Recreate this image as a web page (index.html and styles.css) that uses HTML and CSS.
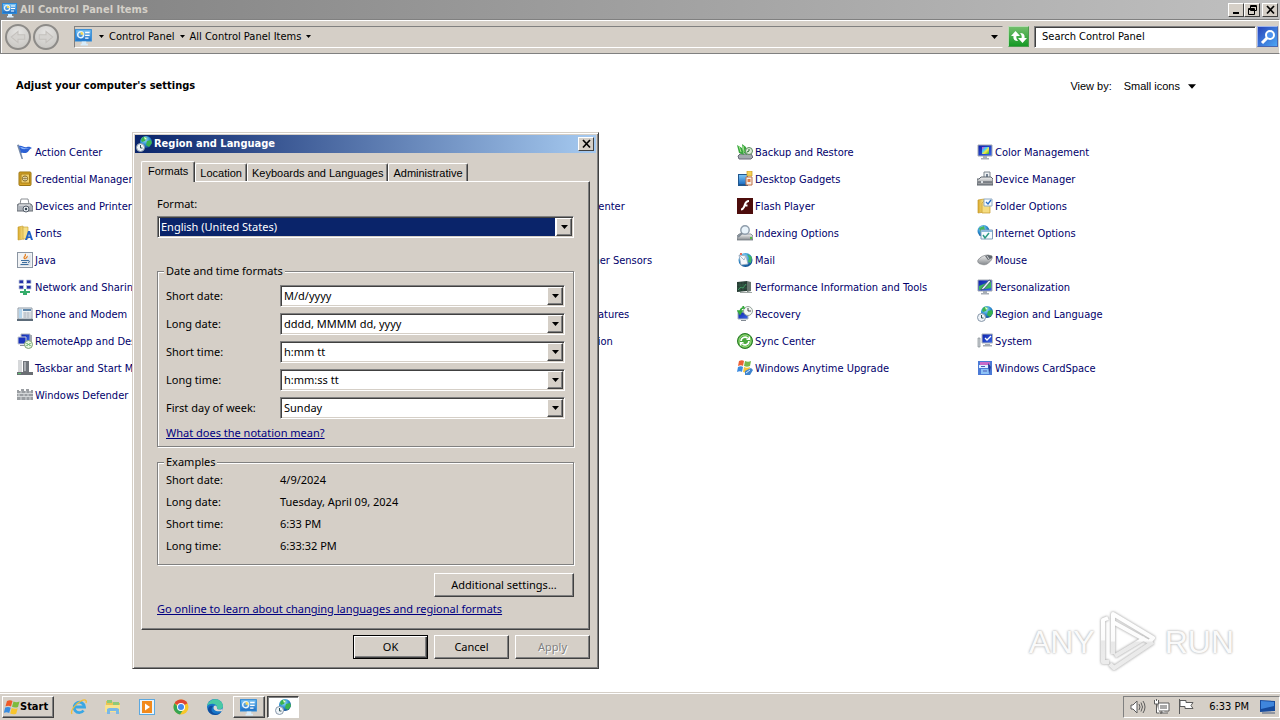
FILE: index.html
```html
<!DOCTYPE html>
<html lang="en">
<head>
<meta charset="utf-8">
<title>All Control Panel Items</title>
<link rel="stylesheet" href="styles.css">
</head>
<body>
<svg class="defs" aria-hidden="true">
  <defs>
    <linearGradient id="gBlue" x1="0" y1="0" x2="0" y2="1"><stop offset="0" stop-color="#7cc4f4"/><stop offset="1" stop-color="#1f6fc4"/></linearGradient>
    <linearGradient id="gScreen" x1="0" y1="0" x2="1" y2="1"><stop offset="0" stop-color="#0c1fa8"/><stop offset="1" stop-color="#3d6be8"/></linearGradient>
    <linearGradient id="gGold" x1="0" y1="0" x2="1" y2="0"><stop offset="0" stop-color="#d9a92c"/><stop offset="1" stop-color="#f8e48e"/></linearGradient>
    <radialGradient id="gGlobe" cx=".4" cy=".3" r=".8"><stop offset="0" stop-color="#a8e4ff"/><stop offset=".5" stop-color="#2c8fd0"/><stop offset="1" stop-color="#0b3b80"/></radialGradient>
    <linearGradient id="gGrey" x1="0" y1="0" x2="0" y2="1"><stop offset="0" stop-color="#f4f4f4"/><stop offset="1" stop-color="#85898d"/></linearGradient>
    <linearGradient id="gRainbow" x1="0" y1="0" x2="1" y2="1"><stop offset="0" stop-color="#f03cc0"/><stop offset=".35" stop-color="#3ad0ff"/><stop offset=".6" stop-color="#ffe93c"/><stop offset="1" stop-color="#18b040"/></linearGradient>
    <linearGradient id="gMark" x1="0" y1="0" x2="0" y2="1"><stop offset="0" stop-color="#fff"/><stop offset=".5" stop-color="#fbfbfb"/><stop offset=".52" stop-color="#e9e9e9"/><stop offset="1" stop-color="#ececec"/></linearGradient>
  </defs>
  <symbol id="cpanel" viewBox="0 0 16 16"><path d="M0 1h15v11H0z" fill="#2c8ad8"/><path d="M1 2h13v9H1z" fill="url(#gBlue)"/><circle cx="5" cy="6" r="2.6" fill="none" stroke="#e8f6ff" stroke-width="1.3"/><path d="M5 6V3.4A2.6 2.6 0 0 1 7.6 6z" fill="#f6d95c"/><path d="M9 4h4M9 6.500h4M9 9h3" stroke="#fff" stroke-width="1.200"/><path d="M6 12h4v2h1.500v1.500H5V14h1z" fill="#d7ecfa"/></symbol>
  <symbol id="region" viewBox="0 0 16 16"><circle cx="10" cy="6" r="6" fill="url(#gGlobe)"/><path d="M6 2c2-2 4-1 5 0L9 5 6 6 5 4zM11 5l4-1 1 3-3 4-3-2z" fill="#39b34f"/><path d="M8 1l3 1-2 2z" fill="#e6ffd4"/><circle cx="4.500" cy="11.500" r="4" fill="#eef3f8" stroke="#8796a8"/><path d="M4.500 9v3h2" fill="none" stroke="#355" /></symbol>
  <symbol id="flag" viewBox="0 0 16 16"><path d="M0 1l2-.5L6 15H4.500z" fill="#7488a8"/><path d="M2 2c3-1 5 2 8 1 2-.5 3 0 5 1-3 1-3 4-6 5-2 .5-3-1-5 0z" fill="#2c61d4"/><path d="M3 3c3-.5 4 2 7 1l3 .5c-4 0-4 1-8 .5z" fill="#8ab4fb"/></symbol>
  <symbol id="safe" viewBox="0 0 16 16"><rect x="2" y="1" width="12" height="13.500" rx="1" fill="#d8a629" stroke="#9a7413"/><rect x="4" y="3" width="8.500" height="9" fill="#f0d070" stroke="#a87e17"/><circle cx="8" cy="7.500" r="2.600" fill="#fbf4cf" stroke="#866a26"/><path d="M8 5v5M5.500 7.500h5" stroke="#866a26" stroke-width=".7"/></symbol>
  <symbol id="printer" viewBox="0 0 16 16"><path d="M4 1h7l1 5H3z" fill="#fff" stroke="#8b8f94"/><path d="M1 6h13l2 3v4H0V8z" fill="#aeb3ba" stroke="#666c74"/><path d="M2 7h11" stroke="#f4f4f4"/><circle cx="9" cy="11" r="3" fill="#e9edf1" stroke="#545c68"/><circle cx="9" cy="11" r="1.200" fill="#31404f"/></symbol>
  <symbol id="fonts" viewBox="0 0 16 16"><path d="M1 2l5-1 1 13-6 1z" fill="url(#gGold)" stroke="#c49a2d" stroke-width=".6"/><path d="M6 2h5v12H6z" fill="#f5df86" stroke="#c49a2d" stroke-width=".6"/><path d="M8 15L11 6h2l3 9h-2l-.7-2h-2.600L10 15zM11.200 11.500h1.600L12 9z" fill="#1e60c8"/></symbol>
  <symbol id="java" viewBox="0 0 16 16"><rect x=".5" y=".5" width="15" height="15" fill="#f1f3f5" stroke="#8b96a3"/><path d="M2 14L14 2v12z" fill="#dfe4ea"/><path d="M8 2c2 2-3 3 0 5M10 4c1 1-2 2-1 3" fill="none" stroke="#e6801f" stroke-width="1.200"/><path d="M4 8.500h7M5 10.500h5M3.500 12.500h8M11 8.500c2 0 2 2 0 2" fill="none" stroke="#3e6f9f"/></symbol>
  <symbol id="network" viewBox="0 0 16 16"><g fill="#2331a8" stroke="#c3ccda" stroke-width=".8"><path d="M2 1h4.500v3.500H2zM9.500 1H14v3.500H9.500zM2 6.500h4.500V10H2zM9.500 6.500H14V10H9.500z"/></g><path d="M7 10h2v2h4v2h-3v2H6v-2H3v-2h4z" fill="#35ad6b"/></symbol>
  <symbol id="phone" viewBox="0 0 16 16"><path d="M1 2h14v11H1z" fill="#eef2f5" stroke="#8f9ba7"/><path d="M2 3h3v9H2z" fill="#b4d4ec"/><path d="M6 3h8v2H6z" fill="#5f87ab"/><path d="M6 7h8M6 9h8M6 11h8M8 6v6M11 6v6" stroke="#aab3bc" stroke-width=".8"/><path d="M0 13h16v2H0z" fill="#5c6b79"/></symbol>
  <symbol id="remote" viewBox="0 0 16 16"><path d="M4 1h9v8H4z" fill="url(#gScreen)" stroke="#b4b8bd"/><path d="M1 4h8v7H1z" fill="#1a33bd" stroke="#c8ccd2"/><path d="M3 12h5v1H3z" fill="#8a9098"/><path d="M13 2h2v6h-2z" fill="#a3a9b1"/><circle cx="11.500" cy="11.500" r="4" fill="#e5f4de" stroke="#7e9e72"/><path d="M9.500 10l1.500 1.500L9.500 13M13.500 10L12 11.500l1.500 1.500" fill="none" stroke="#38933b"/></symbol>
  <symbol id="taskbar" viewBox="0 0 16 16"><path d="M1 0h4v13H1z" fill="#d6d8da"/><path d="M6 1h6v11H6z" fill="#70757b"/><path d="M7 2h2v9H7z" fill="#a9adb2"/><path d="M0 12h16v3H0z" fill="#6a6e73"/><path d="M1 13h3v1H1z" fill="#5bc26b"/></symbol>
  <symbol id="defender" viewBox="0 0 16 16"><path d="M0 3h2v1h2V2h3v2h2V2h3v2h2V3h2v10H0z" fill="#9a9ea2"/><path d="M0 6.500h16M0 9.500h16M4 4v2.500M9 4v2.500M13 4v2.500M2 7v2.500M7 7v2.500M11 7v2.500M4 10v3M9 10v3M13 10v3" stroke="#e2e4e6" stroke-width=".8"/></symbol>
  <symbol id="backup" viewBox="0 0 16 16"><path d="M1 12l2-2h11l2 3-2 2H2z" fill="#a3a9ae" stroke="#667"/><path d="M0 1l5 3 2 7-5-2zM5 0l4 3 1 8-4-3z" fill="#39a63e"/><path d="M2 2l2 6M6 2l1 6" stroke="#a5e890"/><circle cx="12" cy="7" r="3.500" fill="#dcebd9" stroke="#5d8a5d"/><path d="M12 5v2l-2 1" stroke="#236b2b" fill="none"/></symbol>
  <symbol id="gadgets" viewBox="0 0 16 16"><path d="M1 3h10v12H1z" fill="#20568e"/><path d="M2 4h8v9H2z" fill="url(#gBlue)"/><path d="M10 0h5v5h-5z" fill="#f4d056" stroke="#c99c20" stroke-width=".7"/><path d="M9 6h6v8H9z" fill="#f6efe7" stroke="#c07046"/><path d="M10.500 8h3v3h-3z" fill="#df7a44"/></symbol>
  <symbol id="flash" viewBox="0 0 16 16"><path d="M0 0h16v16H0z" fill="#4d0d0c"/><path d="M12 3C8 3 8 7 7 9s-1.500 2.500-3 2.500M7.500 7.500h3" stroke="#fff" stroke-width="2" fill="none"/></symbol>
  <symbol id="indexing" viewBox="0 0 16 16"><path d="M0 11l2-2h12l2 2v4H0z" fill="url(#gGrey)" stroke="#747b83" stroke-width=".8"/><circle cx="8" cy="5" r="4.200" fill="#eaf4fb" stroke="#8f9dab" stroke-width="1.400"/><path d="M5 8l-4 4" stroke="#808b96" stroke-width="2"/><path d="M13 12h2v2h-2z" fill="#58ba45"/></symbol>
  <symbol id="mail" viewBox="0 0 16 16"><circle cx="8.500" cy="8" r="7" fill="url(#gGlobe)"/><path d="M10 2l5 3-1 6-3-1 1-4z" fill="#42b565"/><path d="M2 3l7 1 2 8-7 1z" fill="#f5f8fc" stroke="#98a9be" stroke-width=".8"/><path d="M2 3l5 5 2-4" fill="none" stroke="#98a9be" stroke-width=".8"/><path d="M3 1h2v2H3z" fill="#e36a58"/></symbol>
  <symbol id="perf" viewBox="0 0 16 16"><path d="M0 3l10-1v10L0 13z" fill="#283d35"/><path d="M10 2l4 1v9l-4 1z" fill="#68766f"/><path d="M0 6h10M0 9h10M3 3v10M6 3v9" stroke="#37694b" stroke-width=".6"/><path d="M1 11l3-3 2 1 3-4" stroke="#3f9660" fill="none"/><path d="M3 13h12v1H3z" fill="#9ca4a1"/></symbol>
  <symbol id="recovery" viewBox="0 0 16 16"><path d="M1 6h10v7H1z" fill="url(#gScreen)" stroke="#a9b3bf"/><circle cx="11" cy="5" r="4.500" fill="#f3f7f4" stroke="#95a39b"/><path d="M11 2v3h3" stroke="#444" fill="none"/><path d="M3 8c0-5 1-6 4-6l-1-2M3 8L1 5h4z" stroke="#35a83c" stroke-width="1.600" fill="#35a83c"/><path d="M4 14h5v1H4z" fill="#818992"/></symbol>
  <symbol id="sync" viewBox="0 0 16 16"><circle cx="8" cy="8" r="7.500" fill="#48a63c" stroke="#2c7c27"/><circle cx="8" cy="8" r="6" fill="none" stroke="#a4e084"/><path d="M4 8a4 4 0 0 1 6.500-3M12 8a4 4 0 0 1-6.500 3" stroke="#fff" stroke-width="1.800" fill="none"/><path d="M9 7h4V3zM7 9H3v4z" fill="#fff"/></symbol>
  <symbol id="winflag" viewBox="0 0 16 16"><path d="M3 2c2-1 4-1 5.500 0L7 7.500C5.500 6.500 3.500 6.500 1.500 7.300z" fill="#ee5a28"/><path d="M9.500 2.500c2 1 4 1 6 0L14 8c-2 .8-4 .7-6-.2z" fill="#7dbb3c"/><path d="M1.200 8.500c2-.8 4-.8 5.500.2L5.200 14C3.700 13 1.900 12.800-.1 13.700z" fill="#388ce0"/><path d="M7.700 9c2 1 4 1 6 .2L12.200 14.700c-2 .8-4 .7-6-.2z" fill="#f8c52c"/></symbol>
  <symbol id="upgrade" viewBox="0 0 16 16"><path d="M2 1c2-1 4-1 5 0L6 6C5 5 3 5 1 6z" fill="#ec6035"/><path d="M8 1c2 1 4 1 6 0l-1 5c-2 1-4 1-6 0z" fill="#75b94c"/><path d="M1 7c2-1 4-1 5 0l-1 5c-1-1-3-1-5 0z" fill="#3b8be0"/><path d="M7 7c2 1 4 1 6 0l-1 5c-2 1-4 1-6 0z" fill="#f4c53c"/><path d="M8 11l6-3 2 2-3 5H8z" fill="#3f85cf"/><path d="M9 13l4-3" stroke="#d8ecff" fill="none"/></symbol>
  <symbol id="monitor" viewBox="0 0 16 16"><path d="M1 1h14v11H1z" fill="url(#gScreen)" stroke="#a4aab2"/><path d="M6 12h4v2h2v1.500H4V14h2z" fill="#a7adb5"/></symbol>
  <symbol id="color" viewBox="0 0 16 16"><use href="#monitor"/><path d="M5 3h7v7H5z" fill="url(#gRainbow)"/></symbol>
  <symbol id="device" viewBox="0 0 16 16"><path d="M7 1h6v7H7z" fill="#edf0f2" stroke="#7f868e"/><path d="M9 3h2v3H9z" fill="#738192"/><path d="M2 8l2-2h10l2 2v6H0V8z" fill="url(#gGrey)" stroke="#5d646d"/><path d="M1 11h14" stroke="#4e555e"/><path d="M4 10h2v2H4z" fill="#dde2e6"/></symbol>
  <symbol id="folder" viewBox="0 0 16 16"><path d="M1 2l6-1v13l-6 1z" fill="url(#gGold)" stroke="#c49a2d" stroke-width=".7"/><path d="M7 3h6v12H5V5z" fill="#f5dc80" stroke="#c49a2d" stroke-width=".7"/><path d="M7 1h8v7H7z" fill="#f5fbff" stroke="#8ea9c2"/><path d="M9 4l2 2 3-4" fill="none" stroke="#2b6fc6" stroke-width="1.300"/></symbol>
  <symbol id="internet" viewBox="0 0 16 16"><circle cx="6.500" cy="6" r="6" fill="url(#gGlobe)"/><path d="M2 3l5-2 1 4-4 3z" fill="#48b85c"/><path d="M4 5h11.500v9H4z" fill="#f6fbff" stroke="#819fb9"/><path d="M4 5h11v2H4z" fill="#8db9db"/><path d="M6 10l2 3 4-5" fill="none" stroke="#2c9b83" stroke-width="1.500"/></symbol>
  <symbol id="mouse" viewBox="0 0 16 16"><path d="M1 8c2-3 6-5 10-5l4 1c1 3-2 6-5 8-2 1-4 1-6 0-2 0-4-2-3-4z" fill="url(#gGrey)" stroke="#85898d" stroke-width=".8"/><path d="M8 4l3 4 4-2V4l-4-1z" fill="#63686e"/><path d="M10 4l2 3" stroke="#d4d7da"/></symbol>
  <symbol id="personal" viewBox="0 0 16 16"><use href="#monitor"/><path d="M2 7l12-5v7l-12 2z" fill="#3db65c"/><path d="M5 9l7-8 2 1-7 8-3 1z" fill="#e9f1fa" stroke="#32406a" stroke-width=".7"/></symbol>
  <symbol id="system" viewBox="0 0 16 16"><path d="M5 1h10.500v9H5z" fill="url(#gScreen)" stroke="#aeb5bc"/><path d="M8 5l2 2 4-4" stroke="#fff" fill="none" stroke-width="1.300"/><path d="M1 5h2v9H1z" fill="#cbd0d4" stroke="#858c94" stroke-width=".7"/><path d="M8 11h5v1h2v1.500H6V12h2z" fill="#a6acb3"/></symbol>
  <symbol id="cardspace" viewBox="0 0 16 16"><path d="M1 1h14v14H1z" fill="#4c7ad6"/><path d="M3 2h10v3H3z" fill="#c96ac8"/><path d="M2 5h9v3H2z" fill="#dff0ff"/><path d="M4 9h9l-1 5H4z" fill="#8dc2f6"/><path d="M11 3l3 4-2 7z" fill="#253b96"/><path d="M4 6.500h4M6 11h4" stroke="#4d5cb8"/></symbol>
  <symbol id="ie" viewBox="0 0 18 18"><path d="M13.500 12.500A5.200 5.200 0 1 1 14.500 9H5" fill="none" stroke="#3aa7e4" stroke-width="2.800"/><path d="M2 16C0 13 5 6 11 3c4-2 6-1 5 2" fill="none" stroke="#f3bd35" stroke-width="1.300"/></symbol>
  <symbol id="explorer" viewBox="0 0 18 18"><path d="M2 3h6l1 2h7v9H2z" fill="#e9c552"/><path d="M3 2h5v3H3zM9 4h6v3H9z" fill="#8ec978"/><path d="M1 7h15v7H1z" fill="#f8e38f"/><path d="M3 16v-5l2-1h8l2 1v5h-3v-3H6v3z" fill="#79b8e6"/></symbol>
  <symbol id="player" viewBox="0 0 18 18"><path d="M1 1h16v16H1z" fill="#5ca8df"/><path d="M2 2h14v14H2z" fill="#e9f5fd"/><path d="M4 3h10v12H4z" fill="#f28a1c"/><path d="M7 5.500l5 3.500-5 3.500z" fill="#fff"/></symbol>
  <symbol id="chrome" viewBox="0 0 18 18"><circle cx="9" cy="9" r="7.500" fill="#f7c72a"/><path d="M9 9L2.500 5.200a7.500 7.500 0 0 1 13 0z" fill="#df4534"/><path d="M2.500 5.200a7.500 7.500 0 0 0 5.500 11.200l3-4.400-4-2z" fill="#36a553"/><circle cx="9" cy="9" r="4" fill="#fff"/><circle cx="9" cy="9" r="3" fill="#4389ec"/></symbol>
  <symbol id="edge" viewBox="0 0 18 18"><circle cx="9" cy="9" r="8" fill="#1776c9"/><path d="M1 8C3-1 16-1 17 8c0 4-5 4-6 2 1-4-6-6-10-2z" fill="#49c9a4"/><path d="M7 8c-5 7 4 10 8 6-3 5-12 3-13-2 0-3 2-5 5-4z" fill="#124c9a"/><path d="M8 8c-2 4 2 6 8 5l1-3c-1 2-6 2-6 0 0-3-2-3-3-2z" fill="#dcdad4"/></symbol>
  <symbol id="down" viewBox="0 0 7 4"><path d="M0 0h7L3.500 4z"/></symbol>
</svg>

<header class="titlebar">
  <svg class="i16"><use href="#cpanel"/></svg>
  <h1 class="titlebar-text">All Control Panel Items</h1>
  <div class="window-buttons">
    <button class="wbtn" aria-label="Minimize"><svg viewBox="0 0 11 10"><path d="M2 7h6v2H2z"/></svg></button>
    <button class="wbtn" aria-label="Restore"><svg viewBox="0 0 11 10"><path d="M3.500 0.500h6v5h-6zM3 1.500h7M1.500 3.500h6v6h-6zM1 4.500h7" fill="none" stroke="#000"/></svg></button>
    <button class="wbtn wbtn-close" aria-label="Close"><svg viewBox="0 0 11 10"><path d="M2 1l7 7.500M9 1L2 8.500" stroke="#000" stroke-width="1.700"/></svg></button>
  </div>
</header>

<nav class="toolbar" aria-label="Navigation">
  <div class="history">
    <button class="round" aria-label="Back"><svg viewBox="0 0 16 16"><path d="M14 6H8V3L2 8l6 5v-3h6z"/></svg></button>
    <button class="round" aria-label="Forward"><svg viewBox="0 0 16 16"><path d="M2 6h6V3l6 5-6 5v-3H2z"/></svg></button>
  </div>
  <div class="address">
    <svg class="i18"><use href="#cpanel"/></svg>
    <svg class="crumb-arrow"><use href="#down"/></svg>
    <a href="#" class="crumb">Control Panel</a>
    <svg class="crumb-arrow"><use href="#down"/></svg>
    <a href="#" class="crumb">All Control Panel Items</a>
    <svg class="crumb-arrow"><use href="#down"/></svg>
    <button class="address-drop" aria-label="Previous locations"><svg><use href="#down"/></svg></button>
  </div>
  <button class="tool refresh" aria-label="Refresh"><svg viewBox="0 0 18 18"><path d="M8 13C4 13 3 11 3.500 8H1l4.500-5L10 8H6.500c-.5 2 0 3 1.500 5zM10 5c4 0 5 2 4.500 5H17l-4.500 5L8 10h3.500c.5-2 0-3-1.500-5z" fill="#fff"/></svg></button>
  <input class="search" type="text" aria-label="Search Control Panel" placeholder="Search Control Panel">
  <button class="tool go" aria-label="Search"><svg viewBox="0 0 18 18"><circle cx="11" cy="7" r="4" fill="#4d91ee" stroke="#fff" stroke-width="2"/><path d="M8 10l-5 5" stroke="#fff" stroke-width="3"/></svg></button>
</nav>

<main class="content">
  <div class="heading">
    <h2 class="adjust">Adjust your computer's settings</h2>
    <div class="viewby"><span>View by:</span><button class="view-choice">Small icons <svg><use href="#down"/></svg></button></div>
  </div>
  <div class="items">
    <ul class="column">
      <li><a href="#"><svg class="i16"><use href="#flag"/></svg>Action Center</a></li>
      <li><a href="#"><svg class="i16"><use href="#safe"/></svg>Credential Manager</a></li>
      <li><a href="#"><svg class="i16"><use href="#printer"/></svg>Devices and Printers</a></li>
      <li><a href="#"><svg class="i16"><use href="#fonts"/></svg>Fonts</a></li>
      <li><a href="#"><svg class="i16"><use href="#java"/></svg>Java</a></li>
      <li><a href="#"><svg class="i16"><use href="#network"/></svg>Network and Sharing Center</a></li>
      <li><a href="#"><svg class="i16"><use href="#phone"/></svg>Phone and Modem</a></li>
      <li><a href="#"><svg class="i16"><use href="#remote"/></svg>RemoteApp and Desktop Connections</a></li>
      <li><a href="#"><svg class="i16"><use href="#taskbar"/></svg>Taskbar and Start Menu</a></li>
      <li><a href="#"><svg class="i16"><use href="#defender"/></svg>Windows Defender</a></li>
    </ul>
    <ul class="column column-middle">
      <li class="row-3"><a href="#"><svg class="i16"><use href="#internet"/></svg>Ease of Access Center</a></li>
      <li class="row-5"><a href="#"><svg class="i16"><use href="#region"/></svg>Location and Other Sensors</a></li>
      <li class="row-7"><a href="#"><svg class="i16"><use href="#java"/></svg>Programs and Features</a></li>
      <li class="row-8"><a href="#"><svg class="i16"><use href="#mouse"/></svg>Speech Recognition</a></li>
    </ul>
    <ul class="column">
      <li><a href="#"><svg class="i16"><use href="#backup"/></svg>Backup and Restore</a></li>
      <li><a href="#"><svg class="i16"><use href="#gadgets"/></svg>Desktop Gadgets</a></li>
      <li><a href="#"><svg class="i16"><use href="#flash"/></svg>Flash Player</a></li>
      <li><a href="#"><svg class="i16"><use href="#indexing"/></svg>Indexing Options</a></li>
      <li><a href="#"><svg class="i16"><use href="#mail"/></svg>Mail</a></li>
      <li><a href="#"><svg class="i16"><use href="#perf"/></svg>Performance Information and Tools</a></li>
      <li><a href="#"><svg class="i16"><use href="#recovery"/></svg>Recovery</a></li>
      <li><a href="#"><svg class="i16"><use href="#sync"/></svg>Sync Center</a></li>
      <li><a href="#"><svg class="i16"><use href="#upgrade"/></svg>Windows Anytime Upgrade</a></li>
    </ul>
    <ul class="column">
      <li><a href="#"><svg class="i16"><use href="#color"/></svg>Color Management</a></li>
      <li><a href="#"><svg class="i16"><use href="#device"/></svg>Device Manager</a></li>
      <li><a href="#"><svg class="i16"><use href="#folder"/></svg>Folder Options</a></li>
      <li><a href="#"><svg class="i16"><use href="#internet"/></svg>Internet Options</a></li>
      <li><a href="#"><svg class="i16"><use href="#mouse"/></svg>Mouse</a></li>
      <li><a href="#"><svg class="i16"><use href="#personal"/></svg>Personalization</a></li>
      <li><a href="#"><svg class="i16"><use href="#region"/></svg>Region and Language</a></li>
      <li><a href="#"><svg class="i16"><use href="#system"/></svg>System</a></li>
      <li><a href="#"><svg class="i16"><use href="#cardspace"/></svg>Windows CardSpace</a></li>
    </ul>
  </div>
  <div class="watermark">
    <span>ANY</span>
    <svg viewBox="0 0 60 64"><g fill="none" stroke="url(#gMark)" stroke-width="4" stroke-linejoin="round"><path d="M8 8l-5 2v42h6"/><path d="M13 44V4l40 24-4 4-36-20M53 32L14 58l-4-4M15 46l30-18"/></g></svg>
    <span>RUN</span>
  </div>
</main>

<section class="dialog" role="dialog" aria-labelledby="dialog-title">
  <header class="dialog-title">
    <svg class="i16"><use href="#region"/></svg>
    <h2 id="dialog-title">Region and Language</h2>
    <button class="wbtn" aria-label="Close"><svg viewBox="0 0 11 10"><path d="M2 1l7 7.500M9 1L2 8.500" stroke="#000" stroke-width="1.700"/></svg></button>
  </header>
  <div class="tabs" role="tablist">
    <button class="tab tab-active" role="tab" aria-selected="true">Formats</button>
    <button class="tab" role="tab">Location</button>
    <button class="tab" role="tab">Keyboards and Languages</button>
    <button class="tab" role="tab">Administrative</button>
  </div>
  <form class="panel">
    <label class="format-label" for="format">Format:</label>
    <div class="combo combo-selected"><select id="format"><option>English (United States)</option></select><span class="combo-arrow"><svg><use href="#down"/></svg></span></div>
    <fieldset class="group formats">
      <legend>Date and time formats</legend>
      <div class="field"><label for="sd">Short date:</label><div class="combo"><select id="sd"><option>M/d/yyyy</option></select><span class="combo-arrow"><svg><use href="#down"/></svg></span></div></div>
      <div class="field"><label for="ld">Long date:</label><div class="combo"><select id="ld"><option>dddd, MMMM dd, yyyy</option></select><span class="combo-arrow"><svg><use href="#down"/></svg></span></div></div>
      <div class="field"><label for="st">Short time:</label><div class="combo"><select id="st"><option>h:mm tt</option></select><span class="combo-arrow"><svg><use href="#down"/></svg></span></div></div>
      <div class="field"><label for="lt">Long time:</label><div class="combo"><select id="lt"><option>h:mm:ss tt</option></select><span class="combo-arrow"><svg><use href="#down"/></svg></span></div></div>
      <div class="field"><label for="fd">First day of week:</label><div class="combo"><select id="fd"><option>Sunday</option></select><span class="combo-arrow"><svg><use href="#down"/></svg></span></div></div>
      <a class="link" href="#">What does the notation mean?</a>
    </fieldset>
    <fieldset class="group">
      <legend>Examples</legend>
      <dl class="examples">
        <dt>Short date:</dt><dd>4/9/2024</dd>
        <dt>Long date:</dt><dd>Tuesday, April 09, 2024</dd>
        <dt>Short time:</dt><dd>6:33 PM</dd>
        <dt>Long time:</dt><dd>6:33:32 PM</dd>
      </dl>
    </fieldset>
    <button class="btn btn-wide" type="button">Additional settings...</button>
    <a class="link" href="#">Go online to learn about changing languages and regional formats</a>
  </form>
  <footer class="actions">
    <button class="btn btn-default">OK</button>
    <button class="btn">Cancel</button>
    <button class="btn" disabled>Apply</button>
  </footer>
</section>

<footer class="taskbar">
  <button class="start"><svg class="i16"><use href="#winflag"/></svg>Start</button>
  <div class="tasks">
    <button class="task" aria-label="Internet Explorer"><svg class="i18"><use href="#ie"/></svg></button>
    <button class="task" aria-label="Windows Explorer"><svg class="i18"><use href="#explorer"/></svg></button>
    <button class="task" aria-label="Media Player"><svg class="i18"><use href="#player"/></svg></button>
    <button class="task" aria-label="Chrome"><svg class="i18"><use href="#chrome"/></svg></button>
    <button class="task" aria-label="Edge"><svg class="i18"><use href="#edge"/></svg></button>
    <button class="task task-open" aria-label="Control Panel"><svg class="i18"><use href="#cpanel"/></svg></button>
    <button class="task task-pressed" aria-label="Region and Language"><svg class="i16"><use href="#region"/></svg></button>
  </div>
  <div class="tray">
    <svg class="i18" viewBox="0 0 18 18"><g fill="none" stroke="#5c5c5c"><path d="M2 7h2l4-4v12l-4-4H2z" fill="#fff"/><path d="M10 6q2 3 0 6M12 4.500q3 4.500 0 9M14 3q4 6 0 12"/></g></svg>
    <svg class="i18" viewBox="0 0 18 18"><g fill="#fff" stroke="#5c5c5c"><path d="M5 5h11v8H5z" /><path d="M7 7h7v4H7z" fill="#a9a9a9" stroke="none"/><path d="M9 13v2h-2h8"/><path d="M1.500 2v4h4V2M3.500 1v2M3.500 6v9h3"/></g></svg>
    <svg class="i18" viewBox="0 0 18 18"><path d="M2.500 1v15M3 2.500h6v2h7l-2 3 2 3H8v-2H3z" fill="#fff" stroke="#5c5c5c"/></svg>
    <time>6:33 PM</time>
    <svg class="i16" viewBox="0 0 16 16"><path d="M0 1l15 1v10L0 13z" fill="#164b9d"/><path d="M1 2l13 1v4L1 10z" fill="#3f86dc"/><path d="M2 14h13" stroke="#4a5d7a"/></svg>
  </div>
</footer>
</body>
</html>
```

FILE: styles.css
```css
:root {
  --face: #d5cfc7;
  --shadow: #808080;
  --dark: #404040;
  --ui: "DejaVu Sans Condensed", "DejaVu Sans", sans-serif;
  --dlg: "Noto Sans", "Open Sans", sans-serif;
  --narrow: "Liberation Sans", sans-serif;
}
* { box-sizing: border-box; }
body {
  margin: 0;
  min-height: 100vh;
  display: flex;
  flex-direction: column;
  position: relative;
  background: #fff;
  color: #000;
  font: 11px/14px var(--ui);
}
button, input, select { font: inherit; color: inherit; margin: 0; padding: 0; border-radius: 0; }
a { text-decoration: none; color: inherit; }
svg { display: block; flex: none; }
.defs { position: absolute; width: 0; height: 0; }
.i16 { width: 16px; height: 16px; }
.i18 { width: 18px; height: 18px; }

.titlebar {
  display: flex;
  align-items: center;
  gap: 2px;
  height: 19px;
  padding: 0 2px;
  background: linear-gradient(90deg, #808080, #c0c0c0);
}
.titlebar-text { margin: 0; font: bold 11px/14px var(--ui); color: #d4d0c8; }
.window-buttons { display: flex; margin-left: auto; }
.wbtn {
  width: 16px;
  height: 14px;
  display: grid;
  place-items: center;
  background: var(--face);
  border: 1px solid;
  border-color: #fff var(--dark) var(--dark) #fff;
}
.wbtn svg { width: 11px; height: 10px; }
.wbtn-close { margin-left: 2px; }

.toolbar {
  display: flex;
  align-items: center;
  height: 35px;
  padding: 0 1px 0 4px;
  background: var(--face);
  border: 1px solid var(--shadow);
  border-right-color: #fff;
  box-shadow: inset 1px 1px #fff;
}
.history { display: flex; gap: 2px; margin-right: 15px; }
.round {
  width: 26px;
  height: 26px;
  display: grid;
  place-items: center;
  border: 2px solid #8d8b88;
  border-radius: 50%;
  background: radial-gradient(circle at 50% 30%, #e6e5e3, #c3c1bd);
}
.round svg { width: 18px; height: 18px; fill: #d5d3d0; stroke: #c4c1bd; stroke-width: 1px; }
.address {
  flex: 1;
  display: flex;
  align-items: center;
  height: 22px;
  border: 1px solid;
  border-color: var(--shadow) var(--face) #fff var(--shadow);
}
.crumb-arrow { width: 5px; height: 3px; margin: 0 5px; }
.address .i18 + .crumb-arrow { margin-left: 6px; }
.address-drop { margin-left: auto; width: 16px; height: 18px; border: 0; background: none; display: grid; place-items: center; }
.address-drop svg { width: 7px; height: 4px; }
.tool { width: 21px; height: 21px; display: grid; place-items: center; border: 1px solid; }
.tool svg { width: 18px; height: 18px; }
.refresh { margin: 0 5px; background: linear-gradient(#72bd6b, #159a25); border-color: #b9dcb5 #4d9b50 #4d9b50 #b9dcb5; }
.go { margin-left: 1px; background: linear-gradient(135deg, #2844ba, #4da6f4); border-color: #9fb4ec #4a66b0 #4a66b0 #9fb4ec; }
.search {
  width: 222px;
  height: 22px;
  padding: 0 7px;
  background: #fff;
  border: 1px solid;
  border-color: var(--shadow) #fff #fff var(--shadow);
  box-shadow: inset 1px 1px var(--dark);
}
.search::placeholder { color: #000; opacity: 1; }

.content { flex: 1; position: relative; padding: 24px 0 0 16px; }
.heading { display: flex; justify-content: space-between; padding-right: 84px; }
.adjust { margin: 0; font: bold 11px/16px var(--ui); }
.viewby { display: flex; gap: 12px; font-family: var(--narrow); line-height: 16px; }
.view-choice { display: flex; align-items: center; gap: 8px; border: 0; background: none; }
.view-choice svg { width: 8px; height: 5px; }
.items { display: grid; grid-template-columns: 480px 240px 240px 240px; padding-top: 44px; }
.column { list-style: none; margin: 0; padding: 0; display: grid; grid-template-rows: repeat(10, 27px); }
.column a { display: flex; align-items: center; gap: 2px; height: 27px; padding-left: 1px; color: #00006b; line-height: 18px; white-space: nowrap; }
.column a { padding-top: 2px; }
.column .i16 { margin-bottom: 2px; }
.row-3 { grid-row: 3; }
.row-5 { grid-row: 5; }
.row-7 { grid-row: 7; }
.row-8 { grid-row: 8; }

.watermark {
  position: absolute;
  right: 46px;
  bottom: 18px;
  display: flex;
  align-items: center;
  gap: 5px;
  color: #fafafa;
  font: 32px/64px var(--narrow);
  text-shadow: 0 0 2px #b4b4b4, 0 0 3px #ccc;
}
.watermark svg { width: 60px; height: 64px; filter: drop-shadow(0 0 1px #b8b8b8) drop-shadow(0 0 1px #ccc); }

.dialog {
  position: absolute;
  left: 132px;
  top: 132px;
  width: 467px;
  padding: 2px 2px 9px;
  background: var(--face);
  border: 1px solid;
  border-color: var(--face) var(--dark) var(--dark) var(--face);
  box-shadow: inset 1px 1px #fff, inset -1px -1px var(--shadow);
  font: 11px/14px var(--dlg);
}
.dialog-title {
  display: flex;
  align-items: center;
  gap: 2px;
  height: 18px;
  padding: 0 2px 0 1px;
  background: linear-gradient(90deg, #0a246a, #a6caf0);
  color: #fff;
}
.dialog-title h2 { margin: 0; font: bold 11px/14px var(--ui); }
.dialog-title .wbtn { margin-left: auto; }
.tabs { display: flex; align-items: flex-end; margin: 8px 7px 0 6px; font-family: var(--narrow); }
.tab {
  height: 18px;
  padding: 0 4px;
  background: var(--face);
  border: 1px solid;
  border-color: #fff var(--dark) transparent #fff;
  border-bottom: 0;
  border-radius: 2px 2px 0 0;
  box-shadow: inset -1px 0 var(--shadow);
}
.tab-active { position: relative; z-index: 1; height: 21px; margin-bottom: -1px; padding: 0 6px 3px; }
.panel {
  display: flex;
  flex-direction: column;
  margin: 0 6px;
  padding: 14px 15px 9px;
  border: 1px solid;
  border-color: #fff var(--dark) var(--dark) #fff;
  box-shadow: inset -1px -1px var(--shadow);
}
.format-label { line-height: 16px; margin-bottom: 4px; }
.combo {
  display: grid;
  align-items: center;
  height: 22px;
  background: #fff;
  border: 1px solid;
  border-color: var(--shadow) #fff #fff var(--shadow);
  box-shadow: inset 1px 1px var(--dark), inset -1px -1px var(--face);
}
.combo > * { grid-area: 1 / 1; }
.combo select {
  appearance: none;
  width: 100%;
  height: 20px;
  padding: 0 20px 0 3px;
  border: 0;
  background: none;
}
.combo-selected select { width: auto; height: 18px; margin: 1px 18px 1px 2px; padding: 0 1px; background: #0a246a; color: #fff; }
.combo-arrow {
  justify-self: end;
  width: 16px;
  height: 18px;
  margin-right: 1px;
  display: grid;
  place-items: center;
  pointer-events: none;
  background: var(--face);
  border: 1px solid;
  border-color: #fff var(--dark) var(--dark) #fff;
  box-shadow: inset -1px -1px var(--shadow);
}
.combo-arrow svg { width: 7px; height: 4px; }
.group {
  min-width: 0;
  margin: 8px 0 0;
  padding: 0 8px 7px;
  border: 1px solid var(--shadow);
  box-shadow: 1px 1px #fff, inset 1px 1px #fff;
}
.group legend { padding: 0 2px; margin-left: -2px; line-height: 14px; background: var(--face); }
.formats { margin-top: 26px; padding: 4px 8px 2px; }
.field { display: grid; grid-template-columns: 114px 1fr; align-items: center; height: 28px; }
.link { color: #000080; text-decoration: underline; line-height: 22px; }
.examples { display: grid; grid-template-columns: 114px 1fr; margin: 0; line-height: 22px; }
.examples dd { margin: 0; }
.btn {
  width: 75px;
  height: 24px;
  background: var(--face);
  border: 1px solid;
  border-color: #fff var(--dark) var(--dark) #fff;
  box-shadow: inset -1px -1px var(--shadow);
}
.btn:disabled { color: var(--shadow); text-shadow: 1px 1px #fff; }
.btn-default { border-color: #000; box-shadow: inset 1px 1px #fff, inset -1px -1px var(--dark), inset -2px -2px var(--shadow); }
.btn-wide { width: 140px; align-self: flex-end; margin: 8px 0 1px; }
.actions { display: flex; justify-content: flex-end; gap: 6px; padding: 5px 6px 0; }

.taskbar {
  display: flex;
  align-items: center;
  height: 28px;
  padding: 1px 0 0 2px;
  background: var(--face);
  border-top: 1px solid var(--face);
  box-shadow: inset 0 1px #fff;
}
.start {
  display: flex;
  align-items: center;
  width: 52px;
  height: 22px;
  padding-left: 1px;
  background: var(--face);
  border: 1px solid;
  border-color: #fff var(--dark) var(--dark) #fff;
  box-shadow: inset -1px -1px var(--shadow);
  font: bold 11px/14px var(--ui);
}
.tasks { display: flex; gap: 2px; margin-left: 9px; }
.task { width: 32px; height: 22px; display: grid; place-items: center; border: 1px solid transparent; background: none; }
.task-open { background: var(--face); border-color: #fff var(--dark) var(--dark) #fff; box-shadow: inset -1px -1px var(--shadow); }
.task-pressed { background: #fff; border-color: var(--dark) #fff #fff var(--dark); box-shadow: inset 1px 1px var(--shadow); }
.tray {
  display: flex;
  align-items: center;
  gap: 6px;
  height: 22px;
  margin-left: auto;
  padding: 0 3px 0 5px;
  border: 1px solid;
  border-color: var(--shadow) #fff #fff var(--shadow);
}
.tray time { margin: 0 5px 0 8px; }
```
